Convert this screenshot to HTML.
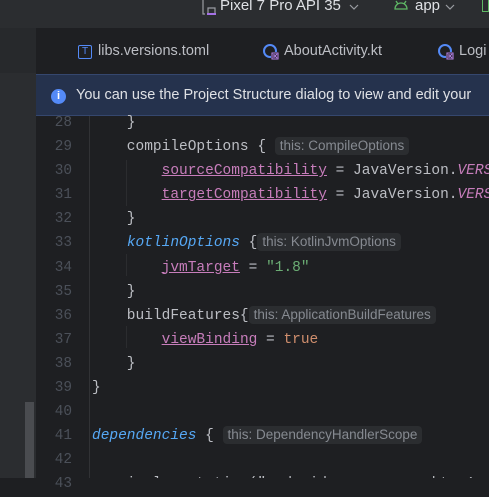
<!DOCTYPE html>
<html><head><style>
*{margin:0;padding:0;box-sizing:border-box}
body{width:489px;height:478px;overflow:hidden;background:#1e1f22;position:relative;font-family:"Liberation Sans",sans-serif}
.abs{position:absolute}
.code{font-family:"Liberation Mono",monospace;font-size:14.5px;color:#bcbec4;white-space:pre}
.ln{font-family:"Liberation Mono",monospace;font-size:14.4px;color:#4b5059;width:30px;text-align:right}
.p{color:#c77dbb;text-decoration:underline;text-decoration-color:#c77dbb}
.k{color:#56a8f5;font-style:italic}
.s{color:#6aab73}
.o{color:#cf8e6d}
.i{color:#c77dbb;font-style:italic}
.hint{font-family:"Liberation Sans",sans-serif;font-size:13.5px;color:#868a91;background:#2b2d30;border-radius:4px;padding:0 5px;display:inline-block;line-height:18px}
</style></head><body>
<div class="abs" style="left:0;top:0;width:489px;height:28px;background:#2b2d30"></div>
<div class="abs" style="left:0;top:28px;width:36px;height:450px;background:#2b2d30"></div>
<div class="abs" style="left:0;top:28px;width:36px;height:45px;background:#27292c"></div>
<div class="abs" style="left:25px;top:402px;width:9px;height:76px;background:#4a4c50"></div>
<!-- toolbar -->
<svg class="abs" style="left:200px;top:0" width="16" height="18"><path d="M3 0v14h2M8 8h7v6H8z" stroke="#9a9ca2" fill="none" stroke-width="1.2"/><rect x="7" y="13" width="9" height="2" fill="#a571e6"/></svg>
<div class="abs" style="left:220px;top:-3px;font-size:15px;color:#dfe1e5">Pixel 7 Pro API 35</div>
<svg class="abs" style="left:349px;top:3px" width="10" height="8"><path d="M1 2l4 4 4-4" stroke="#9a9ca2" fill="none" stroke-width="1.2"/></svg>
<svg class="abs" style="left:393px;top:0" width="16" height="12"><path d="M2 9a6 6 0 0 1 12 0z M3 1l2 3 M13 1l-2 3" stroke="#5fb865" fill="none" stroke-width="1.3"/></svg>
<div class="abs" style="left:415px;top:-3px;font-size:15px;color:#dfe1e5">app</div>
<svg class="abs" style="left:445px;top:3px" width="10" height="8"><path d="M1 2l4 4 4-4" stroke="#9a9ca2" fill="none" stroke-width="1.2"/></svg>
<div class="abs" style="left:482px;top:0;width:7px;height:12px;border:1.5px solid #5fb865;border-top:none"></div>
<!-- tabs -->
<div class="abs" style="left:78px;top:45px;width:14px;height:14px;border:1.3px solid #548af7;border-radius:2px;color:#548af7;font-size:10px;text-align:center;line-height:12px">T</div>
<div class="abs" style="left:98px;top:43px;font-size:14.5px;color:#bcbec4">libs.versions.toml</div>
<svg class="abs" style="left:262px;top:43px" width="18" height="18"><circle cx="8" cy="8" r="6" stroke="#548af7" stroke-width="2" fill="none"/><rect x="9" y="9" width="8" height="8" fill="#1e1f22"/><path d="M10 10h6v6h-6z M12 11v4 M15 11l-2 2 2 2" stroke="#b480e5" fill="none" stroke-width="1.1"/></svg>
<div class="abs" style="left:284px;top:43px;font-size:14.5px;color:#bcbec4">AboutActivity.kt</div>
<svg class="abs" style="left:437px;top:43px" width="18" height="18"><circle cx="8" cy="8" r="6" stroke="#548af7" stroke-width="2" fill="none"/><rect x="9" y="9" width="8" height="8" fill="#1e1f22"/><path d="M10 10h6v6h-6z M12 11v4 M15 11l-2 2 2 2" stroke="#b480e5" fill="none" stroke-width="1.1"/></svg>
<div class="abs" style="left:459px;top:43px;font-size:14.5px;color:#bcbec4;white-space:nowrap;width:30px;overflow:hidden">Logi</div>
<!-- banner -->
<div class="abs" style="left:36px;top:74px;width:453px;height:42px;background:#25324d;border-top:1px solid #35476e;border-bottom:1px solid #35476e"></div>
<div class="abs" style="left:51px;top:89px;width:15px;height:15px;border-radius:50%;background:#548af7;color:#fff;font-size:11px;font-weight:bold;text-align:center;line-height:15px">i</div>
<div class="abs" style="left:76px;top:87px;width:413px;overflow:hidden;font-size:14.5px;color:#dfe1e5;white-space:nowrap">You can use the Project Structure dialog to view and edit your</div>
<!-- guide lines -->
<div class="abs" style="left:89px;top:116px;width:1px;height:362px;background:#313235"></div>
<div class="abs" style="left:126px;top:160px;width:1px;height:46px;background:#2b2c2f"></div>
<div class="abs" style="left:126px;top:254px;width:1px;height:22px;background:#2b2c2f"></div>
<div class="abs" style="left:126px;top:326px;width:1px;height:22px;background:#2b2c2f"></div>
<div class="abs ln" style="left:42px;top:111px;line-height:24.1px">28<br>29<br>30<br>31<br>32<br>33<br>34<br>35<br>36<br>37<br>38<br>39<br>40<br>41<br>42<br>43</div>
<div class="abs code" style="left:92px;top:111px;width:397px;height:367px;overflow:hidden;line-height:24.1px">    }
    compileOptions { <span class="hint">this: CompileOptions</span>
        <span class="p">sourceCompatibility</span> = JavaVersion.<span class="i">VERSION_1_8</span>
        <span class="p">targetCompatibility</span> = JavaVersion.<span class="i">VERSION_1_8</span>
    }
    <span class="k">kotlinOptions</span> {<span class="hint">this: KotlinJvmOptions</span>
        <span class="p">jvmTarget</span> = <span class="s">"1.8"</span>
    }
    buildFeatures{<span class="hint">this: ApplicationBuildFeatures</span>
        <span class="p">viewBinding</span> = <span class="o">true</span>
    }
}

<span class="k">dependencies</span> { <span class="hint">this: DependencyHandlerScope</span>

    implementation("androidx.core:core-ktx:1</div>
</body></html>
